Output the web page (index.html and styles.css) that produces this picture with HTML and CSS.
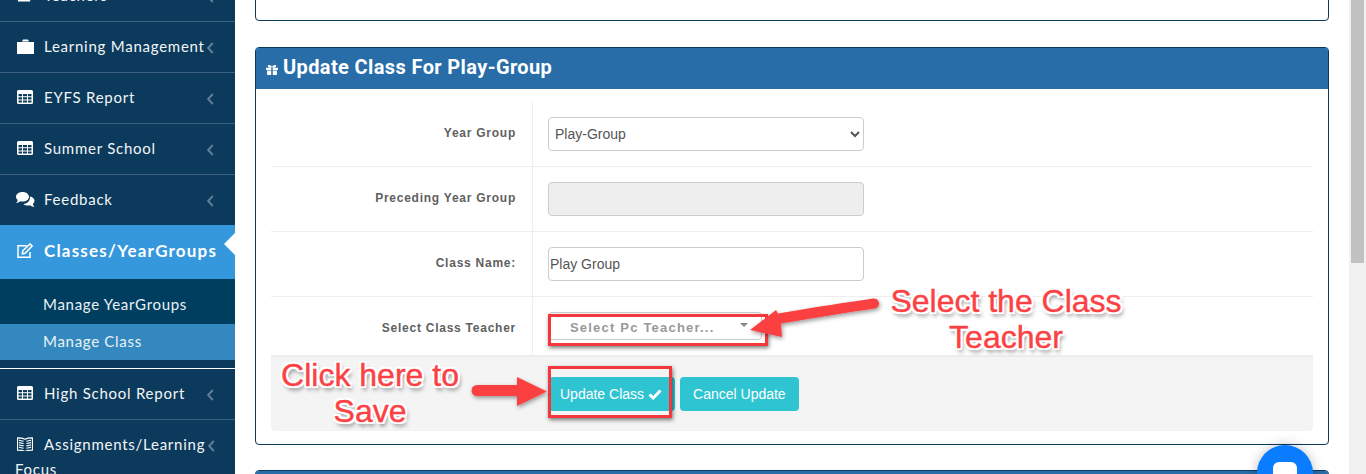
FILE: index.html
```html
<!DOCTYPE html>
<html lang="en">
<head>
  <meta charset="UTF-8">
  <title>Update Class</title>
  <link rel="stylesheet" href="styles.css">
</head>
<body>
  <svg class="icon-defs" xmlns="http://www.w3.org/2000/svg">
    <symbol id="i-table" viewBox="0 0 16 14">
      <path d="M1.500 0h13A1.500 1.500 0 0 1 16 1.500v11a1.500 1.500 0 0 1-1.500 1.500h-13A1.500 1.500 0 0 1 0 12.500v-11A1.500 1.500 0 0 1 1.500 0zM1.500 4v2.200H5V4zM6 4v2.200h4V4zM11 4v2.200h3.500V4zM1.500 7.200v2.200H5V7.200zM6 7.200v2.200h4V7.200zM11 7.200v2.200h3.500V7.200zM1.500 10.400v2.100H5v-2.100zM6 10.400v2.100h4v-2.100zM11 10.400v2.100h3.500v-2.100z" fill-rule="evenodd"/>
    </symbol>
    <symbol id="i-chev" viewBox="0 0 7 12">
      <path d="M5.800 1 1.200 6l4.600 5" fill="none" stroke="currentColor" stroke-width="2"/>
    </symbol>
  </svg>

  <div class="layout">
    <aside class="sidebar">
      <ul class="menu">
        <li class="menu-item">
          <svg class="menu-icon" viewBox="0 0 17 14"><path d="M2 1h11v12H2z" fill="none" stroke="#fff" stroke-width="2"/></svg>
          <span class="menu-text">Teachers</span>
          <svg class="chev"><use href="#i-chev"/></svg>
        </li>
        <li class="menu-item">
          <svg class="menu-icon menu-icon-case" viewBox="0 0 17 15"><path d="M0 3h17v12H0zM5 2.500 6 .5h5l1 2z" fill="#fff"/></svg>
          <span class="menu-text">Learning Management</span>
          <svg class="chev chev-tight"><use href="#i-chev"/></svg>
        </li>
        <li class="menu-item">
          <svg class="menu-icon"><use href="#i-table"/></svg>
          <span class="menu-text">EYFS Report</span>
          <svg class="chev"><use href="#i-chev"/></svg>
        </li>
        <li class="menu-item">
          <svg class="menu-icon"><use href="#i-table"/></svg>
          <span class="menu-text">Summer School</span>
          <svg class="chev"><use href="#i-chev"/></svg>
        </li>
        <li class="menu-item menu-last">
          <svg class="menu-icon menu-icon-wide" viewBox="0 0 20 15"><path d="M7.500 0C11.400 0 14 2.200 14 4.800s-2.600 4.800-6.500 4.800c-.8 0-1.500-.1-2.200-.3C4 10.300 2.500 10.800 1 11c.8-.8 1.500-1.700 1.700-3C1.600 7.100 1 6 1 4.800 1 2.200 3.600 0 7.500 0zM15 4.500c2.500.5 4.500 2.200 4.500 4.300 0 1.200-.6 2.300-1.700 3.100.2 1.200.8 2.100 1.700 3-1.500-.2-3-.7-4.300-1.700-.6.200-1.300.3-2 .3-2 0-3.700-.6-4.800-1.600 4.200-.2 6.800-3 6.600-7.400z" fill="#fff"/></svg>
          <span class="menu-text">Feedback</span>
          <svg class="chev"><use href="#i-chev"/></svg>
        </li>
        <li class="menu-item menu-active">
          <svg class="menu-icon menu-icon-pen" viewBox="0 0 16 16"><path d="M13 9v5.200H1V2.800h8.500M5.800 7.800 13 .9l2.100 2.100-7 7.200-2.800.6z" fill="none" stroke="#fff" stroke-width="1.500"/></svg>
          <span class="menu-text">Classes/YearGroups</span>
        </li>
        <li class="submenu">
          <a class="sub-link">Manage YearGroups</a>
          <a class="sub-link sub-current">Manage Class</a>
        </li>
        <li class="menu-item menu-after-sub">
          <svg class="menu-icon"><use href="#i-table"/></svg>
          <span class="menu-text">High School Report</span>
          <svg class="chev"><use href="#i-chev"/></svg>
        </li>
        <li class="menu-item menu-wrap">
          <div class="wrap-line">
            <svg class="menu-icon" viewBox="0 0 17 15"><path d="M.5 1c3 0 6 .3 8 1.500C10.500 1.300 13.500 1 16.500 1v13c-3 0-6 .3-8 1.500C6.500 14.300 3.500 14 .5 14zM2 3.500l5 1M2 6l5 1M2 8.500l5 1M2 11l5 1M15 3.500l-5 1M15 6l-5 1M15 8.500l-5 1M15 11l-5 1" fill="none" stroke="#fff" stroke-width="1.200"/></svg>
            <span class="menu-text">Assignments/Learning</span>
            <svg class="chev chev-tight"><use href="#i-chev"/></svg>
          </div>
          <div class="wrap-rest">Focus</div>
        </li>
      </ul>
    </aside>

    <main class="content">
      <section class="panel panel-prev"></section>

      <section class="panel panel-form">
        <header class="panel-head">
          <svg class="gift" viewBox="0 0 11 9"><path d="M0 2.500h4.800v2H0zM6.200 2.500H11v2H6.200zM1 5h3.800v4H1zM6.200 5H10v4H6.200zM3 0c1 0 2 .8 2.500 1.800C6 .8 7 0 8 0c.9 0 1.300.5 1.300 1.100 0 .6-.4 1.100-1.300 1.100H3C2.100 2.200 1.700 1.700 1.700 1.100 1.700.5 2.100 0 3 0z" fill="#fff"/></svg>
          <h2>Update Class For Play-Group</h2>
        </header>
        <div class="form-body">
          <div class="form-row">
            <label class="form-label">Year Group</label>
            <div class="form-field">
              <select class="control control-select">
                <option>Play-Group</option>
              </select>
            </div>
          </div>
          <div class="form-row">
            <label class="form-label">Preceding Year Group</label>
            <div class="form-field">
              <input class="control" type="text" disabled>
            </div>
          </div>
          <div class="form-row">
            <label class="form-label">Class Name:</label>
            <div class="form-field">
              <input class="control control-text" type="text" value="Play Group">
            </div>
          </div>
          <div class="form-row form-row-short">
            <label class="form-label">Select Class Teacher</label>
            <div class="form-field">
              <div class="fake-select">
                <span>Select Pc Teacher...</span>
                <i class="caret"></i>
              </div>
            </div>
          </div>
          <div class="form-actions">
            <button class="btn btn-save" type="button">Update Class
              <svg class="check" viewBox="0 0 14 11"><path d="M1.500 5.500 5.200 9l7.300-7.500" fill="none" stroke="#fff" stroke-width="3"/></svg>
            </button>
            <button class="btn" type="button">Cancel Update</button>
          </div>
        </div>
      </section>

      <section class="panel panel-next">
        <header class="panel-head"></header>
      </section>
    </main>

    <div class="scrollbar"><div class="scroll-thumb"></div></div>
  </div>

  <!-- screenshot annotations -->
  <div class="note note-teacher">Select the Class<br>Teacher</div>
  <div class="note note-save">Click here to<br>Save</div>
  <div class="mark mark-select"></div>
  <div class="mark mark-button"></div>
  <svg class="arrows" viewBox="0 0 1366 474" xmlns="http://www.w3.org/2000/svg">
    <defs>
      <filter id="arrow-shadow" x="-20%" y="-40%" width="140%" height="180%">
        <feDropShadow dx="1" dy="2" stdDeviation="2" flood-color="#000" flood-opacity=".4"/>
      </filter>
    </defs>
    <g filter="url(#arrow-shadow)">
      <path d="M875 308.500 C 850 312 815 318 781 323.500 L 782 337 L 750 330 L 776 310 L 778 313.500 C 815 307 850 302 873 298.500 A 5 5 0 0 1 875 308.500 Z" fill="#fb4143"/>
      <path d="M477 385 H 517 V 377 L 547 391.500 L 517 406 V 396 H 477 A 5.500 5.500 0 0 1 477 385 Z" fill="#fb4143"/>
    </g>
  </svg>

  <div class="chat-bubble"><span class="chat-dot"></span></div>
</body>
</html>
```

FILE: styles.css
```css
* {
  box-sizing: border-box;
}

html, body {
  margin: 0;
  height: 100%;
  overflow: hidden;
}

body {
  position: relative;
  background: #fff;
  font-family: "Liberation Sans", Arial, sans-serif;
  color: #555;
}

.icon-defs {
  display: none;
}

.layout {
  display: flex;
  height: 474px;
}

/* sidebar */
.sidebar {
  width: 235px;
  flex: none;
  background: #0c3a5c;
  overflow: hidden;
  font-family: Lato, "Open Sans", sans-serif;
}

.menu {
  list-style: none;
  margin: -29px 0 0;
  padding: 0;
}

.menu-item {
  display: flex;
  align-items: center;
  height: 51px;
  padding: 0 21px 0 16px;
  border-bottom: 1px solid #3d617e;
  color: #f2f5f7;
  font-size: 15px;
  letter-spacing: .75px;
}

.menu-icon {
  width: 16px;
  height: 14px;
  margin: 0 11px 2px 1px;
  fill: #fff;
  flex: none;
}

.menu-icon-case {
  width: 17px;
  height: 15px;
  margin-right: 10px;
}

.menu-icon-wide {
  width: 20px;
  height: 15px;
  margin: 0 9px 2px -1px;
}

.menu-icon-pen {
  height: 16px;
}

.menu-text {
  flex: 1;
  margin-bottom: 2px;
  white-space: nowrap;
}

.chev {
  width: 7px;
  height: 12px;
  margin-top: 2px;
  color: #5f7d95;
  flex: none;
}

.chev-tight {
  margin-left: -1px;
}

.menu-last {
  height: 50px;
  border-bottom: 0;
}

.menu-active {
  position: relative;
  height: 54px;
  padding-right: 10px;
  background: #3597dc;
  border-bottom: 0;
  color: #fff;
  font-size: 17px;
  font-weight: 700;
  letter-spacing: 1.200px;
}

.menu-active .menu-text {
  margin-bottom: 3px;
}

.menu-active::after {
  content: "";
  position: absolute;
  right: 0;
  top: 8px;
  border: 11px solid transparent;
  border-right-color: #fff;
  border-left-width: 0;
}

.submenu {
  height: 90px;
  padding-bottom: 8px;
  background: #0c3a5c;
  border-bottom: 1px solid #fff;
}

.sub-link {
  display: flex;
  align-items: center;
  padding: 0 0 2px 43px;
  color: #ecf1f5;
  font-size: 15px;
  letter-spacing: .7px;
}

.submenu .sub-link:first-child {
  height: 45px;
  padding-top: 7px;
  background: #003e60;
}

.sub-current {
  height: 36px;
  background: #3389bf;
}

.menu-after-sub {
  height: 51px;
}

.menu-wrap {
  display: block;
  height: auto;
  padding-top: 15px;
  border-bottom: 0;
  line-height: 18px;
}

.wrap-line {
  display: flex;
  align-items: center;
}

.wrap-line .chev-tight {
  margin-right: -1px;
}

.wrap-rest {
  margin: 5px 0 0 -1px;
}

/* main content */
.content {
  flex: 1;
  min-width: 0;
  padding: 0 20px;
  overflow: hidden;
}

.panel {
  background: #fff;
  border: 1px solid #0c3a5c;
  border-radius: 4px;
}

.panel-prev {
  height: 60px;
  margin-top: -39px;
}

.panel-form {
  height: 398px;
  margin-top: 26px;
  overflow: hidden;
}

.panel-next {
  height: 60px;
  margin-top: 25px;
  overflow: hidden;
}

.panel-head {
  display: flex;
  align-items: center;
  height: 41px;
  padding: 0 10px;
  background: #286ca8;
  color: #fff;
}

.panel-head h2 {
  margin: 0 0 4px;
  font-family: Roboto, "Noto Sans", sans-serif;
  font-size: 20px;
  font-weight: 700;
  letter-spacing: .38px;
}

.gift {
  width: 12px;
  height: 10px;
  margin: 2px 5px 0 0;
  flex: none;
}

.form-body {
  margin: 13px 15px 0;
}

.form-row {
  display: flex;
  height: 65px;
  border-bottom: 1px solid #eee;
}

.form-row-short {
  height: 58px;
  border-bottom: 0;
}

.form-label {
  display: block;
  width: 262px;
  padding: 24px 16px 0 0;
  border-right: 1px solid #eee;
  text-align: right;
  font-size: 12px;
  font-weight: 700;
  letter-spacing: .75px;
  color: #5f5f5f;
}

.form-field {
  flex: 1;
  padding: 15px 0 0 15px;
}

.control {
  display: block;
  width: 316px;
  height: 34px;
  padding: 0 6px;
  background: #fff;
  border: 1px solid #ccc;
  border-radius: 4px;
  font-family: "Liberation Sans", Arial, sans-serif;
  font-size: 14px;
  color: #555;
}

.control-select {
  padding: 0 2px;
}

.control:disabled {
  background: #eee;
}

.control-text {
  padding-left: 1px;
}

.fake-select {
  display: flex;
  justify-content: space-between;
  align-items: center;
  width: 214px;
  height: 28px;
  padding: 2px 13px 0 21px;
  border: 1px solid #ccc;
  border-radius: 4px;
  font-size: 13px;
  font-weight: 700;
  letter-spacing: 1.200px;
  color: #999;
}

.caret {
  width: 0;
  height: 0;
  margin-bottom: 5px;
  border: 4px solid transparent;
  border-top-color: #888;
  border-bottom-width: 0;
}

.form-actions {
  display: flex;
  gap: 5px;
  height: 76px;
  padding: 20px 0 0 278px;
  background: #f4f4f4;
  border-top: 2px solid #ecedef;
  border-radius: 0 0 4px 4px;
}

.btn {
  display: flex;
  align-items: center;
  gap: 4px;
  height: 34px;
  padding: 0 13px;
  background: #2fc4d2;
  border: 0;
  border-radius: 4px;
  font-family: "Liberation Sans", Arial, sans-serif;
  font-size: 14px;
  color: #fff;
}

.btn-save {
  padding: 0 13px 0 11px;
}

.check {
  width: 14px;
  height: 11px;
}

/* scrollbar */
.scrollbar {
  width: 17px;
  flex: none;
  padding: 0 2px;
  background: #f1f1f1;
}

.scroll-thumb {
  height: 263px;
  background: #c1c1c1;
}

/* annotations laid over the page */
.note {
  position: absolute;
  font-size: 32px;
  line-height: 36px;
  text-align: center;
  color: #fb4143;
  -webkit-text-stroke: .4px #fb4143;
  text-shadow: -2px 0 0 #fff, 2px 0 0 #fff, 0 -2px 0 #fff, 0 2px 0 #fff,
    -2px -2px 0 #fff, 2px -2px 0 #fff, -2px 2px 0 #fff, 2px 2px 0 #fff,
    2px 4px 4px rgba(0, 0, 0, .55);
}

.note-teacher {
  left: 885px;
  top: 283px;
  width: 242px;
}

.note-save {
  left: 275px;
  top: 357px;
  width: 190px;
}

.mark {
  position: absolute;
  border: 3px solid #f2383c;
  box-shadow: 1px 2px 4px rgba(0, 0, 0, .5);
}

.mark-select {
  left: 548px;
  top: 314px;
  width: 220px;
  height: 32px;
}

.mark-button {
  left: 548px;
  top: 366px;
  width: 124px;
  height: 52px;
}

.arrows {
  position: absolute;
  left: 0;
  top: 0;
  width: 1366px;
  height: 474px;
  pointer-events: none;
}

.chat-bubble {
  position: absolute;
  left: 1257px;
  top: 445px;
  width: 56px;
  height: 56px;
  border-radius: 50%;
  background: #0a7cff;
  box-shadow: 0 0 12px rgba(0, 0, 0, .25);
}

.chat-dot {
  position: absolute;
  left: 16px;
  top: 17px;
  width: 24px;
  height: 24px;
  border-radius: 6px;
  background: #fff;
}
```
